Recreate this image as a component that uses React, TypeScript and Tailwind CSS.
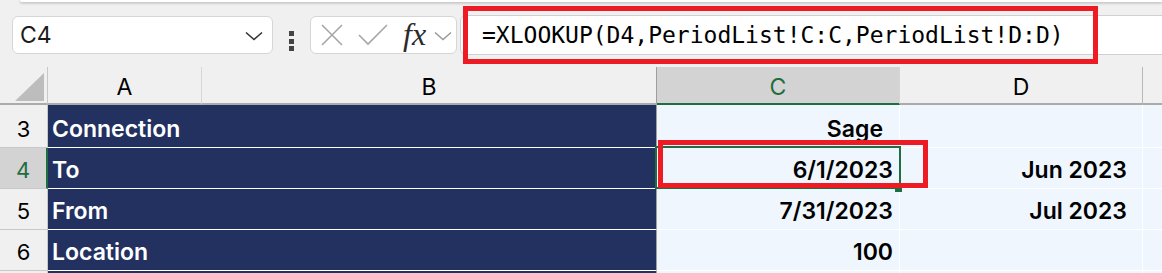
import React from "react";

const NAVY = "bg-[#233161]";

function RowHeader({ n, selected, h }: { n: string; selected?: boolean; h: string }) {
  return (
    <div
      className={`${h} flex items-end justify-center pb-[7px] text-[22px] leading-[22px] border-b border-b-[#c8c8c8] ${
        selected
          ? "bg-[#d3d3d3] text-[#1e6e42] border-r-2 border-r-[#1e6e42]"
          : "bg-[#f0f0f0] text-black border-r border-r-[#c8c8c8]"
      }`}
    >
      {n}
    </div>
  );
}

export default function App() {
  const rows = [
    { n: "3", a: "Connection", c: "Sage", cPad: "pr-[16px]", d: "", h: "h-[43px]" },
    { n: "4", a: "To", c: "6/1/2023", cPad: "pr-[6px]", d: "Jun 2023", h: "h-[41px]", sel: true },
    { n: "5", a: "From", c: "7/31/2023", cPad: "pr-[6px]", d: "Jul 2023", h: "h-[41px]" },
    { n: "6", a: "Location", c: "100", cPad: "pr-[6px]", d: "", h: "h-[41px]" },
    { n: "", a: "", c: "", cPad: "pr-[6px]", d: "", h: "h-[41px]" },
  ];

  return (
    <div className="relative w-[1162px] h-[273px] overflow-hidden bg-[#f0f0f0] font-['Inter',sans-serif]">
      {/* top strip */}
      <div className="h-[2px] ml-[20px] bg-white rounded-bl-[4px] shadow-[0_1px_3px_rgba(0,0,0,0.3)]" />

      {/* formula bar */}
      <div className="relative h-[65px] flex items-start pt-[14px]">
        {/* name box */}
        <div className="ml-[12px] w-[261px] h-[38px] bg-white border border-[#d6d6d6] rounded-[6px] flex items-center justify-between pl-[7px] pr-[9px]">
          <span className="text-[23px] leading-[22px] text-[#1a1a1a]">C4</span>
          <svg width="18" height="10" viewBox="0 0 18 10" className="mt-[2px]">
            <path d="M1 1.5 L9 8.5 L17 1.5" fill="none" stroke="#333" strokeWidth="1.6" />
          </svg>
        </div>
        {/* dots */}
        <div className="ml-[16px] self-center mt-[-1px] flex flex-col gap-[2.5px]">
          <div className="w-[5px] h-[5px] bg-[#444]" />
          <div className="w-[5px] h-[5px] bg-[#444]" />
          <div className="w-[5px] h-[5px] bg-[#444]" />
        </div>
        {/* fx box */}
        <div className="ml-[16px] w-[147px] h-[38px] bg-white border border-[#d6d6d6] rounded-[6px] flex items-center pl-[9px]">
          <svg width="24" height="22" viewBox="0 0 24 22">
            <path d="M2 1 L22 21 M22 1 L2 21" stroke="#a6a6a6" strokeWidth="1.6" fill="none" />
          </svg>
          <svg width="30" height="22" viewBox="0 0 30 22" className="ml-[14px]">
            <path d="M1 11 L10 20 L29 1" stroke="#a6a6a6" strokeWidth="1.6" fill="none" />
          </svg>
          <span className="ml-[15px] font-['Liberation_Serif',serif] italic text-[32px] leading-[30px] text-[#2a2a2a] mt-[-2px]">
            fx
          </span>
          <svg width="18" height="10" viewBox="0 0 18 10" className="ml-[8px] mt-[2px]">
            <path d="M1 1.5 L9 8.5 L17 1.5" fill="none" stroke="#9a9a9a" strokeWidth="1.5" />
          </svg>
        </div>
        {/* formula input */}
        <div className="ml-[3px] mt-[-1px] flex-1 mr-[-10px] h-[40px] bg-white border border-[#d0d0d0] rounded-l-[6px] flex items-center pl-[21px]">
          <span className="font-['DejaVu_Sans_Mono',monospace] text-[23px] leading-[24px] text-black whitespace-nowrap">
            =XLOOKUP(D4,PeriodList!C:C,PeriodList!D:D)
          </span>
        </div>
        {/* red highlight */}
        <div className="absolute left-[463px] top-[4px] w-[635px] h-[58px] border-[5px] border-[#ed1c24]" />
      </div>

      {/* grid */}
      <div className="relative grid grid-cols-[48px_154px_455px_243px_243px_1fr]">
        {/* header row */}
        <div className="h-[38px] bg-[#f0f0f0] border-r border-r-[#c8c8c8] border-b-2 border-b-[#ababab] flex items-end justify-end pr-[3px] pb-[2px]">
          <svg width="29" height="28" viewBox="0 0 29 28">
            <polygon points="29,0 29,28 0,28" fill="#bdbdbd" />
          </svg>
        </div>
        <div className="h-[38px] bg-[#f0f0f0] border-r border-r-[#d6d6d6] border-b-2 border-b-[#ababab] flex items-center justify-center pt-[3px] text-[23px] leading-[22px] text-black">
          A
        </div>
        <div className="h-[38px] bg-[#f0f0f0] border-r border-r-[#9e9e9e] border-b-2 border-b-[#ababab] flex items-center justify-center pt-[3px] text-[23px] leading-[22px] text-black">
          B
        </div>
        <div className="h-[38px] bg-[#d3d3d3] border-r border-r-[#d6d6d6] border-b-2 border-b-[#1e6e42] flex items-center justify-center pt-[3px] text-[23px] leading-[22px] text-[#1e6e42]">
          C
        </div>
        <div className="h-[38px] bg-[#f0f0f0] border-r border-r-[#b8b8b8] border-b-2 border-b-[#ababab] flex items-center justify-center pt-[3px] text-[23px] leading-[22px] text-black">
          D
        </div>
        <div className="h-[38px] bg-[#f0f0f0] border-b-2 border-b-[#ababab]" />

        {rows.map((r, i) => (
          <React.Fragment key={i}>
            <RowHeader n={r.n} selected={r.sel} h={r.h} />
            <div className={`${r.h} ${NAVY} border-b border-b-white flex items-end pl-[4px] pb-[7px] text-white font-semibold text-[23px] leading-[22px]`}>
              {r.a}
            </div>
            <div className={`${r.h} ${NAVY} border-b border-b-white border-r border-r-[#a0a0a0]`} />
            <div className={`${r.h} bg-[#eff6fe] border-b border-b-white border-r border-r-white flex items-end justify-end ${r.cPad} pb-[7px] text-black font-semibold text-[23px] leading-[22px]`}>
              {r.c}
            </div>
            <div className={`${r.h} bg-[#eff6fe] border-b border-b-white border-r border-r-white flex items-end justify-end pr-[15px] pb-[7px] text-black font-semibold text-[23px] leading-[22px]`}>
              {r.d}
            </div>
            <div className={`${r.h} bg-[#eff6fe] border-b border-b-white`} />
          </React.Fragment>
        ))}

        {/* selected cell outline */}
        <div className="absolute left-[655px] top-[79px] w-[246px] h-[43px] border-2 border-[#1e6e42]" />
        <div className="absolute left-[895px] top-[120px] w-[7px] h-[5px] bg-[#1e6e42]" />
        {/* red highlight on C4 */}
        <div className="absolute left-[658px] top-[73px] w-[270px] h-[48px] border-[5px] border-[#ed1c24]" />
      </div>
    </div>
  );
}
